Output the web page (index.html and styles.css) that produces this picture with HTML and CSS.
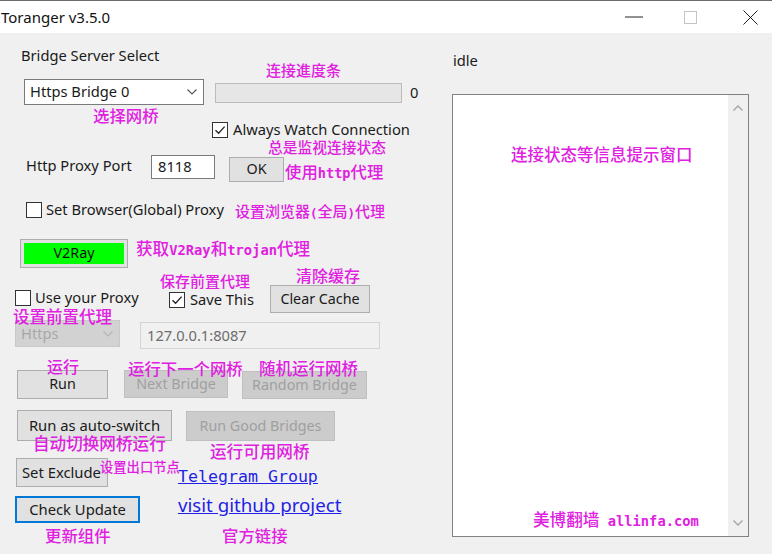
FILE: index.html
```html
<!DOCTYPE html>
<html lang="zh-CN">
<head>
<meta charset="utf-8">
<title>Toranger v3.5.0</title>
<link rel="stylesheet" href="styles.css">
</head>
<body>
<div class="window">
  <div class="titlebar">
    <span class="title">Toranger v3.5.0</span>
    <div class="wctl">
      <svg class="ic-min" width="18" height="2" viewBox="0 0 18 2"><line x1="0" y1="1" x2="18" y2="1"/></svg>
      <svg class="ic-max" width="13" height="13" viewBox="0 0 13 13"><rect x="0.5" y="0.5" width="12" height="12"/></svg>
      <svg class="ic-close" width="15" height="15" viewBox="0 0 15 15"><path d="M0.5 0.5L14.5 14.5M14.5 0.5L0.5 14.5"/></svg>
    </div>
  </div>
  <div class="client">
    <div class="left">
      <div class="row r1"><span class="lbl-bridge">Bridge Server Select</span></div>
      <div class="row r2">
        <div class="combo combo-bridge"><span>Https Bridge 0</span><svg class="chev" width="10" height="6" viewBox="0 0 10 6"><path d="M0.5 0.5L5 5L9.5 0.5"/></svg></div>
        <div class="progress"></div>
        <span class="pnum">0</span>
      </div>
      <div class="row r3">
        <span class="chk chk-watch"><span class="box"><svg width="14" height="14" viewBox="0 0 14 14"><path d="M2.5 7.2L5.6 10.3L11.6 3.6"/></svg></span><span class="ctext">Always Watch Connection</span></span>
      </div>
      <div class="row r4">
        <span class="lbl-port">Http Proxy Port</span>
        <div class="tb tb-port">8118</div>
        <div class="btn btn-ok">OK</div>
      </div>
      <div class="row r5">
        <span class="chk chk-browser"><span class="box"></span><span class="ctext">Set Browser(Global) Proxy</span></span>
      </div>
      <div class="row r6">
        <div class="btn btn-v2ray">V2Ray</div>
      </div>
      <div class="row r7">
        <span class="chk chk-use"><span class="box"></span><span class="ctext">Use your Proxy</span></span>
        <span class="chk chk-save"><span class="box"><svg width="14" height="14" viewBox="0 0 14 14"><path d="M2.5 7.2L5.6 10.3L11.6 3.6"/></svg></span><span class="ctext">Save This</span></span>
        <div class="btn btn-clear">Clear Cache</div>
      </div>
      <div class="row r8">
        <div class="combo combo-dis"><span>Https</span><svg class="chev" width="10" height="6" viewBox="0 0 10 6"><path d="M0.5 0.5L5 5L9.5 0.5"/></svg></div>
        <div class="tb tb-proxy">127.0.0.1:8087</div>
      </div>
      <div class="row r9">
        <div class="btn btn-run">Run</div>
        <div class="btn dis btn-next">Next Bridge</div>
        <div class="btn dis btn-random">Random Bridge</div>
      </div>
      <div class="row r10">
        <div class="btn btn-auto">Run as auto-switch</div>
        <div class="btn dis btn-good">Run Good Bridges</div>
      </div>
      <div class="row r11">
        <div class="btn btn-excl">Set Exclude</div>
        <a class="link link-tg" href="#">Telegram Group</a>
      </div>
      <div class="row r12">
        <div class="btn btn-update">Check Update</div>
        <a class="link link-gh" href="#">visit github project</a>
      </div>
    </div>
    <div class="right">
      <span class="idle">idle</span>
      <div class="logbox">
        <div class="logtext"></div>
        <div class="vscroll">
          <svg width="10" height="6" viewBox="0 0 10 6"><path d="M0.5 5.5L5 1L9.5 5.5"/></svg>
          <svg width="10" height="6" viewBox="0 0 10 6"><path d="M0.5 0.5L5 5L9.5 0.5"/></svg>
        </div>
      </div>
    </div>
  </div>

  <span class="ann a-progress">连接進度条</span>
  <span class="ann a-select">选择网桥</span>
  <span class="ann a-watch">总是监视连接状态</span>
  <span class="ann a-http">使用<span class="m">http</span>代理</span>
  <span class="ann a-browser">设置浏览器<span class="m">(</span>全局<span class="m">)</span>代理</span>
  <span class="ann a-v2ray">获取<span class="m">V2Ray</span>和<span class="m">trojan</span>代理</span>
  <span class="ann a-save">保存前置代理</span>
  <span class="ann a-clear">清除缓存</span>
  <span class="ann a-front">设置前置代理</span>
  <span class="ann a-run">运行</span>
  <span class="ann a-next">运行下一个网桥</span>
  <span class="ann a-random">随机运行网桥</span>
  <span class="ann a-auto">自动切换网桥运行</span>
  <span class="ann a-good">运行可用网桥</span>
  <span class="ann a-excl">设置出口节点</span>
  <span class="ann a-update">更新组件</span>
  <span class="ann a-official">官方链接</span>
  <span class="ann a-info">连接状态等信息提示窗口</span>
  <span class="ann a-site">美博翻墙<span class="m"> allinfa.com</span></span>
</div>
</body>
</html>
```
FILE: styles.css
```css
* { box-sizing: border-box; }
html, body { margin: 0; padding: 0; }
body {
  background: #f0f0f0;
  font-family: "Noto Sans", "Open Sans", sans-serif;
  font-size: 14.7px;
  color: #1a1a1a;
}
.window {
  position: relative;
  width: 772px;
  height: 554px;
  overflow: hidden;
  display: flex;
  flex-direction: column;
  background: #f0f0f0;
}

/* title bar */
.titlebar {
  height: 33px;
  flex: none;
  background: #fff;
  border-top: 1px solid #6b6b6b;
  display: flex;
  align-items: center;
}
.title { margin-left: 1px; font-size: 15px; color: #111; padding-bottom: 1px; }
.wctl { margin-left: auto; display: flex; align-items: center; padding-right: 14px; }
.wctl svg { fill: none; stroke-width: 1; }
.ic-min { stroke: #222; margin-right: 41px; }
.ic-max { stroke: #c4c4c4; margin-right: 46px; }
.ic-close { stroke: #222; }

/* client */
.client { flex: 1; display: flex; }
.left { width: 440px; flex: none; display: flex; flex-direction: column; }
.row { display: flex; align-items: flex-start; }

.r1 { margin-top: 13px; }
.lbl-bridge { margin-left: 21px; line-height: 18px; }

.r2 { margin-top: 15px; }
.combo {
  display: flex;
  align-items: center;
  background: #fff;
  border: 1px solid #7a7a7a;
  padding-left: 5px;
  padding-bottom: 2px;
}
.combo .chev { margin-left: auto; margin-right: 6px; margin-top: 2px; fill: none; stroke: #555; stroke-width: 1.1; }
.combo-bridge { margin-left: 24px; width: 180px; height: 26px; }
.progress {
  margin-left: 11px;
  margin-top: 4px;
  width: 187px;
  height: 20px;
  background: #e6e6e6;
  border: 1px solid #bcbcbc;
}
.pnum { margin-left: 8px; line-height: 26px; }

.r3 { margin-top: 17px; }
.chk { display: flex; align-items: center; height: 16px; }
.ctext { line-height: 16px; padding-bottom: 2px; }
.box {
  width: 16px;
  height: 16px;
  flex: none;
  background: #fff;
  border: 1px solid #333;
  display: flex;
  align-items: center;
  justify-content: center;
}
.box svg { fill: none; stroke: #222; stroke-width: 1.3; }
.chk-watch { margin-left: 212px; gap: 5px; }

.r4 { margin-top: 17px; }
.lbl-port { margin-left: 26px; width: 125px; line-height: 20px; }
.tb {
  display: flex;
  align-items: center;
  background: #fff;
  border: 1px solid #7a7a7a;
  padding-left: 6px;
  padding-bottom: 2px;
}
.tb-port { width: 64px; height: 24px; }
.btn {
  display: flex;
  align-items: center;
  justify-content: center;
  background: #e1e1e1;
  border: 1px solid #adadad;
  color: #1a1a1a;
  white-space: nowrap;
  overflow: hidden;
  font-size: 14.3px;
  padding-bottom: 2px;
}
.btn.dis { background: #cccccc; border-color: #bfbfbf; color: #a0a0a0; }
.btn-ok { margin-left: 14px; margin-top: 2px; width: 55px; height: 25px; }

.r5 { margin-top: 20px; }
.chk-browser { margin-left: 26px; gap: 4px; }

.r6 { margin-top: 21px; }
.btn-v2ray {
  margin-left: 20px;
  width: 108px;
  height: 29px;
  background: #00ff00;
  box-shadow: inset 0 0 0 3px #e1e1e1;
  color: #111;
}

.r7 { margin-top: 17px; }
.chk-use { margin-left: 15px; margin-top: 5px; width: 154px; gap: 4px; }
.chk-save { margin-top: 7px; width: 101px; gap: 5px; }
.btn-clear { width: 100px; height: 28px; }

.r8 { margin-top: 6px; }
.combo-dis {
  margin-left: 15px;
  margin-top: 1px;
  width: 105px;
  height: 27px;
  background: #d2d2d2;
  border-color: #c8c8c8;
  color: #a8a8a8;
}
.combo-dis .chev { stroke: #b4b4b4; }
.tb-proxy {
  margin-left: 20px;
  margin-top: 3px;
  width: 240px;
  height: 27px;
  background: #f0f0f0;
  border-color: #d4d4d4;
  color: #6d6d6d;
}

.r9 { margin-top: 21px; }
.btn-run { margin-left: 17px; width: 91px; height: 29px; }
.btn-next { margin-left: 16px; width: 104px; height: 28px; }
.btn-random { margin-left: 14px; margin-top: 1px; width: 125px; height: 28px; }

.r10 { margin-top: 11px; }
.btn-auto { margin-left: 17px; width: 155px; height: 31px; font-size: 14.8px; }
.btn-good { margin-left: 14px; margin-top: 1px; width: 149px; height: 30px; }

.r11 { margin-top: 17px; }
.btn-excl { margin-left: 16px; width: 92px; height: 29px; justify-content: flex-start; padding-left: 5px; font-size: 14.8px; }
.link { color: #1f1fe6; text-decoration: underline; white-space: nowrap; }
.link-tg {
  margin-left: 70px;
  margin-top: 9px;
  line-height: 20px;
  font-family: "DejaVu Sans Mono", monospace;
  font-size: 16.6px;
}

.r12 { margin-top: 9px; }
.btn-update { margin-left: 15px; width: 125px; height: 27px; border: 2px solid #0078d7; font-size: 14.8px; }
.link-gh { margin-left: 38px; margin-top: -2px; line-height: 22px; font-size: 18.7px; }

/* right */
.right { flex: 1; display: flex; flex-direction: column; padding-left: 12px; }
.idle { margin-top: 18px; margin-left: 1px; line-height: 18px; }
.logbox {
  margin-top: 25px;
  width: 297px;
  height: 443px;
  background: #fff;
  border: 1px solid #828282;
  display: flex;
}
.logtext { flex: 1; }
.vscroll {
  width: 20px;
  background: #f0f0f0;
  display: flex;
  flex-direction: column;
  justify-content: space-between;
  align-items: center;
  padding: 10px 0;
}
.vscroll svg { fill: none; stroke: #a6a6a6; stroke-width: 1.4; }

/* annotations overlay */
.ann {
  position: absolute;
  color: #e020e0;
  font-family: "Noto Sans CJK SC", sans-serif;
  font-weight: 500;
  line-height: 1;
  white-space: nowrap;
  font-size: 16.4px;
}
.ann .m { font-family: "DejaVu Sans Mono", monospace; font-size: 0.83em; font-weight: bold; }
.a-progress { left: 266px; top: 62px; font-size: 15px; }
.a-select { left: 93px; top: 107px; }
.a-watch { left: 268px; top: 140px; font-size: 14.75px; }
.a-http { left: 285px; top: 163px; }
.a-browser { left: 235px; top: 203px; font-size: 15px; }
.a-v2ray { left: 136px; top: 240px; font-size: 16.6px; }
.a-save { left: 160px; top: 273px; font-size: 15px; }
.a-clear { left: 296px; top: 267px; font-size: 16px; }
.a-front { left: 13px; top: 308px; font-size: 16.5px; }
.a-run { left: 47px; top: 358px; font-size: 16px; }
.a-next { left: 128px; top: 360px; }
.a-random { left: 259px; top: 360px; font-size: 16.5px; }
.a-auto { left: 33px; top: 435px; font-size: 16.6px; }
.a-good { left: 210px; top: 443px; font-size: 16.6px; }
.a-excl { left: 100px; top: 460px; font-size: 13.3px; }
.a-update { left: 45px; top: 527px; }
.a-official { left: 222px; top: 527px; }
.a-info { left: 511px; top: 146px; font-size: 16.5px; }
.a-site { left: 533px; top: 511px; font-size: 16.6px; }
```
